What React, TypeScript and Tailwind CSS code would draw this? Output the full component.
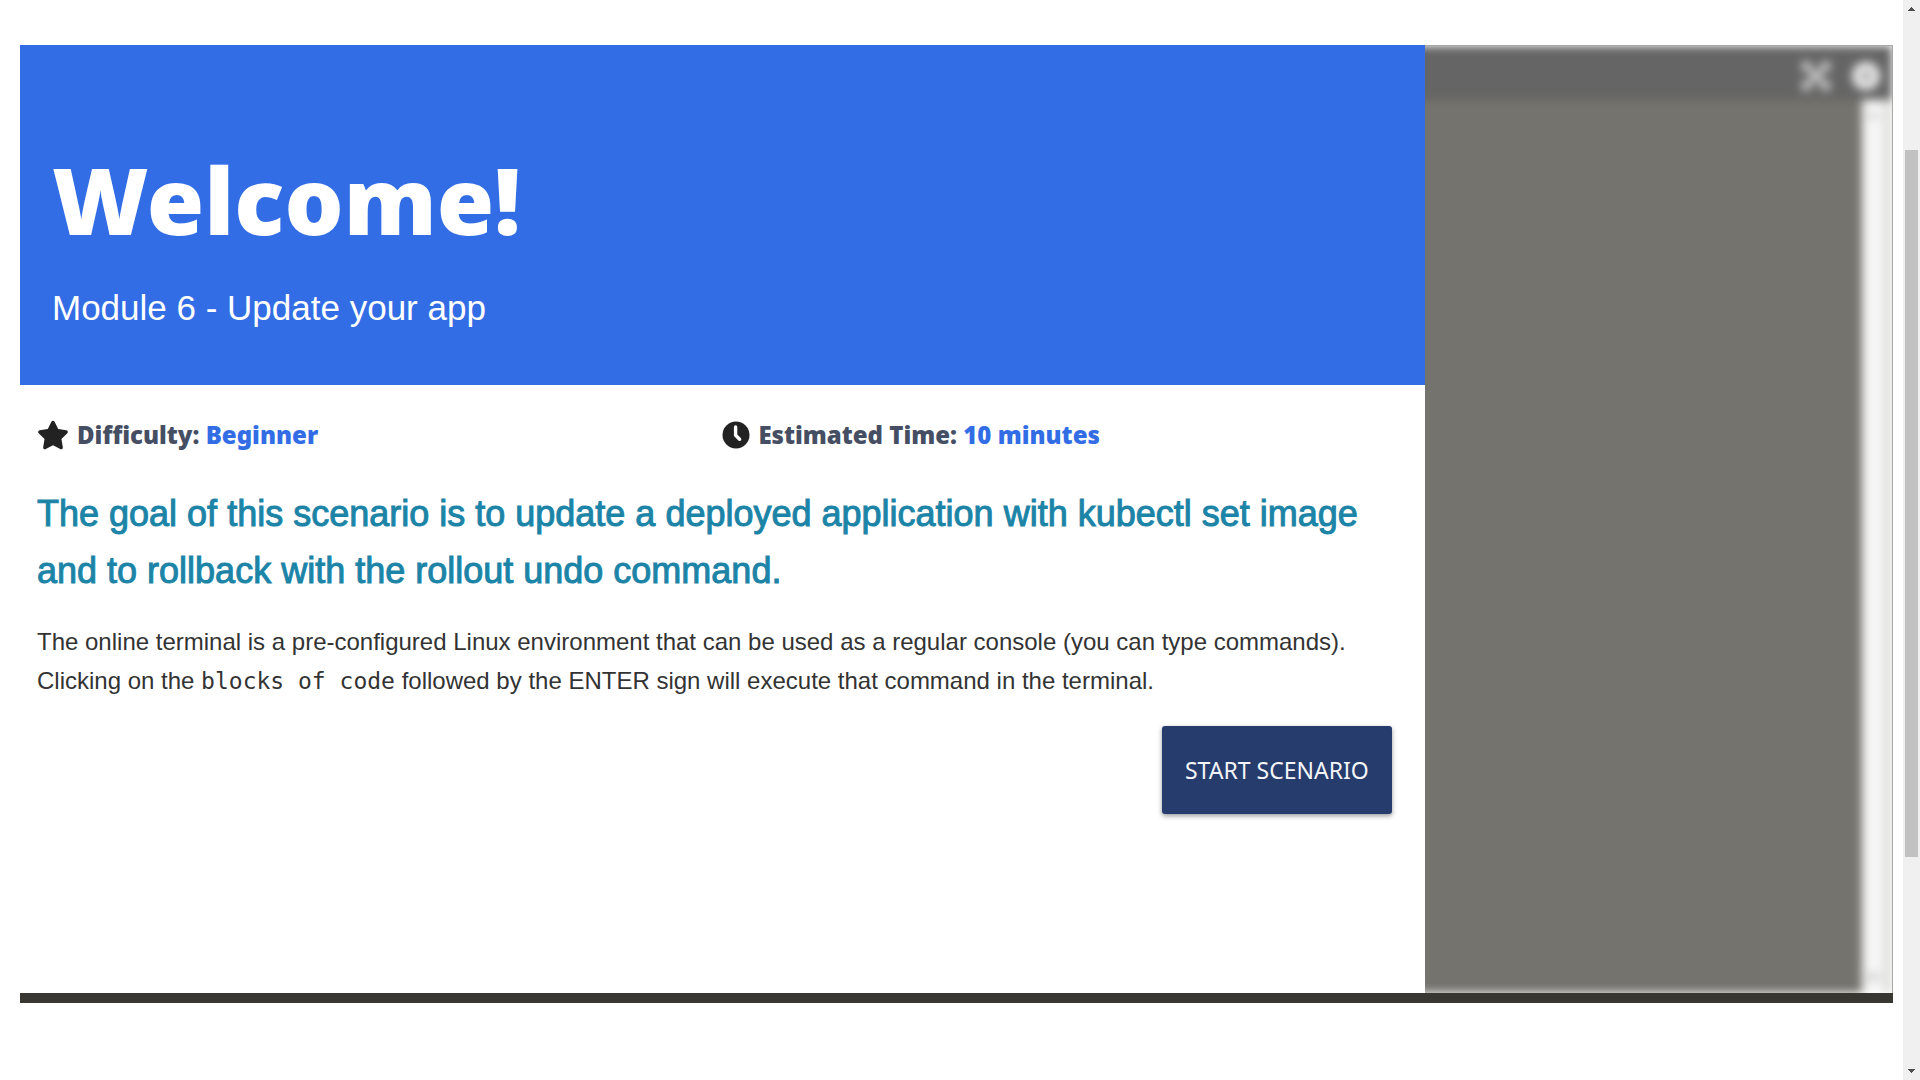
import React from "react";
import { FaStar } from "react-icons/fa";

function ClockIcon() {
  return (
    <svg viewBox="0 0 28 28" className="size-7 shrink-0" aria-hidden="true">
      <circle cx="14" cy="14" r="13.5" fill="#222" />
      <path d="M13.6 6v8.2l4 4" fill="none" stroke="#fff" strokeWidth="3.4" strokeLinecap="round" strokeLinejoin="round" />
    </svg>
  );
}

function TerminalPane() {
  return (
    <aside className="flex min-w-0 flex-1 overflow-hidden border-t border-r border-[#a8a8a4]">
      <div className="-ml-4 flex min-w-0 flex-1 flex-col bg-[#dcdcda] blur-[5px]">
        <div className="flex h-[54px] shrink-0 items-center justify-end gap-[22px] bg-[#656565] pt-1.5 pr-3">
          <button type="button" aria-label="Expand terminal" className="text-[#d2d2d2]">
            <svg viewBox="0 0 28 28" className="size-7" fill="none" stroke="currentColor" strokeWidth="5">
              <path d="M3 3l22 22M25 3L3 25M1 9V1h8M19 1h8v8M27 19v8h-8M9 27H1v-8" />
            </svg>
          </button>
          <button type="button" aria-label="Settings" className="text-[#ececec]">
            <svg viewBox="0 0 28 28" className="size-7">
              <circle cx="14" cy="14" r="10" fill="none" stroke="currentColor" strokeWidth="8" />
              <circle cx="14" cy="14" r="6" fill="#b5b5b5" />
            </svg>
          </button>
        </div>
        <div className="flex flex-1">
          <div className="flex-1 bg-[#74736d]" />
          <div className="mr-2 flex w-[22px] flex-col items-center justify-between bg-[#f6f6f6] py-3">
            <span className="h-2 w-3 bg-[#dedede]" />
            <span className="h-2 w-3 bg-[#d4d4d4]" />
          </div>
        </div>
      </div>
    </aside>
  );
}

function PageScrollbar() {
  return (
    <div className="flex w-[17px] shrink-0 flex-col items-center bg-[#f0f0f0] text-[#505050]">
      <svg viewBox="0 0 17 17" className="size-[17px]" fill="currentColor" shapeRendering="crispEdges">
        <path d="M5 11h7v-1h-1v-1h-1v-1h-1v-1h-1v1h-1v1h-1v1h-1z" />
      </svg>
      <div className="grid w-full flex-1 grid-rows-[133fr_707fr_206fr] px-[2px]">
        <span />
        <span className="bg-[#c1c1c1]" />
      </div>
      <svg viewBox="0 0 17 17" className="size-[17px]" fill="currentColor" shapeRendering="crispEdges">
        <path d="M5 6h7v1h-1v1h-1v1h-1v1h-1v-1h-1v-1h-1v-1h-1z" />
      </svg>
    </div>
  );
}

export default function App() {
  return (
    <div className="flex min-h-screen bg-white font-['Liberation_Sans',sans-serif] text-[#222]">
      <main className="min-w-0 flex-1 pt-[45px] pr-[10px] pb-10 pl-5">
        <div className="flex border-b-10 border-[#383731]">
          <section className="w-3/4 pb-[179px]">
            <header className="bg-[#326de6] px-8 pt-[86px] pb-[52px] text-white">
              <h1 className="font-['Noto_Sans',sans-serif] text-[93px] leading-[136px] font-black">Welcome!</h1>
              <h2 className="mt-4 text-[35px] leading-[50px]">Module 6 - Update your app</h2>
            </header>
            <div className="px-[17px] pt-[31px]">
              <div className="grid grid-cols-2 font-['Noto_Sans',sans-serif] text-[24px] leading-[38px] font-black text-[#454e63]">
                <p className="flex items-center gap-2">
                  <FaStar className="size-8 shrink-0 text-[#222]" />
                  <span>Difficulty: <span className="text-[#326de6]">Beginner</span></span>
                </p>
                <p className="flex items-center gap-2">
                  <ClockIcon />
                  <span>Estimated Time: <span className="text-[#326de6]">10 minutes</span></span>
                </p>
              </div>
              <h3 className="mt-[31px] text-[36px] leading-[57px] text-[#1b84a7] [-webkit-text-stroke:1px]">
                The goal of this scenario is to update a deployed application with kubectl set image
                <br />
                and to rollback with the rollout undo command.
              </h3>
              <p className="mt-[23px] text-[24px] leading-[39px] text-[#333]">
                The online terminal is a pre-configured Linux environment that can be used as a regular console (you can type commands).
                <br />
                Clicking on the <code className="font-['DejaVu_Sans_Mono',monospace] text-[23px]">blocks of code</code> followed by the ENTER sign will execute that command in the terminal.
              </p>
              <div className="mt-[25px] flex justify-end pr-4">
                <button
                  type="button"
                  className="rounded-[3px] bg-[#263c6d] px-[23px] py-[28px] font-['Noto_Sans',sans-serif] text-[23px] leading-8 text-[#f4f5f8] shadow-[0_2px_5px_rgba(0,0,0,0.4)]"
                >
                  START SCENARIO
                </button>
              </div>
            </div>
          </section>
          <TerminalPane />
        </div>
      </main>
      <PageScrollbar />
    </div>
  );
}
